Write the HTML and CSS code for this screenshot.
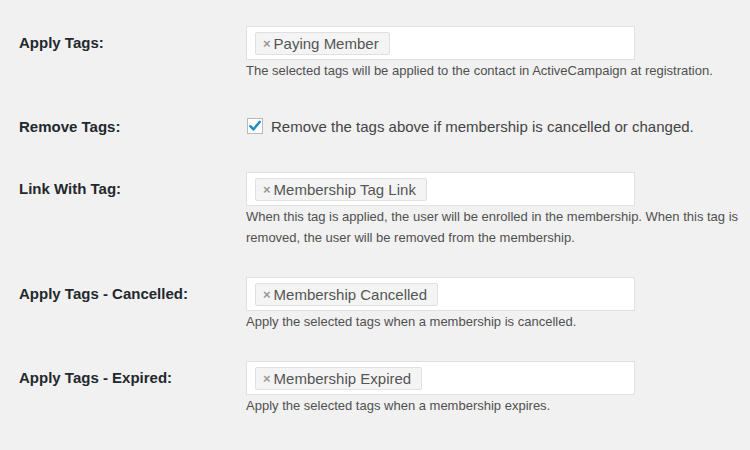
FILE: index.html
```html
<!DOCTYPE html>
<html>
<head>
<meta charset="utf-8">
<link rel="stylesheet" href="styles.css">
</head>
<body>
<div class="form">
  <div class="row">
    <div class="label">Apply Tags:</div>
    <div class="field">
      <div class="select"><span class="tag"><span class="x">×</span>Paying Member</span></div>
      <p class="desc">The selected tags will be applied to the contact in ActiveCampaign at registration.</p>
    </div>
  </div>
  <div class="row">
    <div class="label label-check">Remove Tags:</div>
    <div class="field">
      <label class="check">
        <span class="box"><svg width="14" height="14" viewBox="0 0 14 14"><path d="M2.3 7.2 L5.4 10.4 L11.8 2.8" fill="none" stroke="#1e8cbe" stroke-width="2.4" stroke-linecap="round" stroke-linejoin="round"/></svg></span>
        <span class="check-text">Remove the tags above if membership is cancelled or changed.</span>
      </label>
    </div>
  </div>
  <div class="row">
    <div class="label">Link With Tag:</div>
    <div class="field">
      <div class="select"><span class="tag"><span class="x">×</span>Membership Tag Link</span></div>
      <p class="desc">When this tag is applied, the user will be enrolled in the membership. When this tag is removed, the user will be removed from the membership.</p>
    </div>
  </div>
  <div class="row">
    <div class="label">Apply Tags - Cancelled:</div>
    <div class="field">
      <div class="select"><span class="tag"><span class="x">×</span>Membership Cancelled</span></div>
      <p class="desc">Apply the selected tags when a membership is cancelled.</p>
    </div>
  </div>
  <div class="row">
    <div class="label">Apply Tags - Expired:</div>
    <div class="field">
      <div class="select"><span class="tag"><span class="x">×</span>Membership Expired</span></div>
      <p class="desc">Apply the selected tags when a membership expires.</p>
    </div>
  </div>
</div>
</body>
</html>
```

FILE: styles.css
```css
html, body {
  margin: 0;
  padding: 0;
  background: #f1f1f1;
  font-family: "Liberation Sans", Arial, sans-serif;
  color: #444;
}
.form {
  padding-top: 12px;
}
.row {
  display: flex;
  padding: 14px 0 15px;
}
.label {
  width: 227px;
  padding-left: 19px;
  font-weight: bold;
  font-size: 15px;
  line-height: 34px;
  color: #23282d;
  flex-shrink: 0;
}
.label-check {
  line-height: 33px;
}
.field {
  width: 500px;
}
.select {
  width: 379px;
  height: 27px;
  background: #fff;
  border: 1px solid #e1e1e1;
  display: flex;
  align-items: flex-start;
  padding: 5px 0 0 8px;
  box-sizing: content-box;
}
.tag {
  display: inline-flex;
  align-items: center;
  height: 21px;
  border: 1px solid #e0e0e0;
  background: #f4f4f4;
  border-radius: 2px;
  padding: 0 10px 0 7px;
  font-size: 15px;
  color: #555;
}
.x {
  font-size: 13px;
  color: #999;
  margin-right: 3px;
  font-weight: bold;
}
.desc {
  margin: 0;
  font-size: 13px;
  line-height: 21px;
  color: #505050;
}
.check {
  display: flex;
  align-items: center;
  height: 33px;
}
.box {
  width: 14px;
  height: 14px;
  border: 1px solid #b4b9be;
  background: #fff;
  margin-left: 1px;
  margin-right: 8px;
  display: flex;
  align-items: center;
  justify-content: center;
  position: relative;
  top: -1px;
}
.check-text {
  font-size: 15px;
  color: #444;
}
```
